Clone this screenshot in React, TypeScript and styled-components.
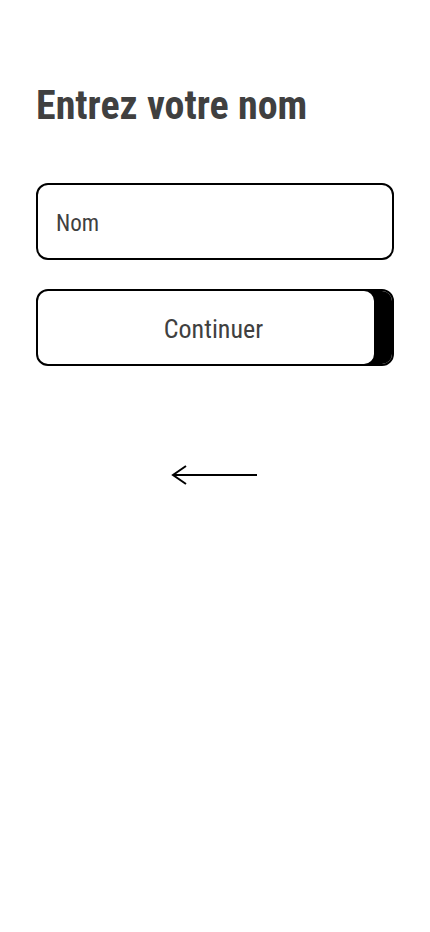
import React from "react";
import styled, { createGlobalStyle } from "styled-components";

const Global = createGlobalStyle`
  html, body { margin: 0; padding: 0; background: #fff; }
  body { font-family: "Roboto Condensed", Roboto, "Liberation Sans", sans-serif; font-stretch: condensed; }
  * { box-sizing: border-box; }
`;

const Page = styled.main`
  width: 430px;
  min-height: 932px;
  padding: 84px 36px 0 36px;
  display: flex;
  flex-direction: column;
`;

const Title = styled.h1`
  margin: 0;
  font-size: 40px;
  font-weight: 700;
  color: #404040;
  line-height: 44px;
`;

const Form = styled.form`
  margin-top: 55px;
  display: flex;
  flex-direction: column;
  gap: 29px;
`;

const Input = styled.input`
  height: 77px;
  width: 100%;
  border: 2px solid #000;
  border-radius: 12px;
  padding: 4px 18px 0;
  font-family: inherit;
  font-stretch: condensed;
  font-size: 23px;
  color: #404040;
  background: #fff;
  outline: none;
  &::placeholder { color: #404040; }
`;

const Button = styled.button`
  height: 77px;
  width: 100%;
  border: 2px solid #000;
  border-radius: 12px;
  background: #fff;
  box-shadow: inset -18px 0 0 #000;
  padding: 2px 3px 0 0;
  font-family: inherit;
  font-stretch: condensed;
  font-size: 26px;
  color: #404040;
  cursor: pointer;
`;

const BackRow = styled.div`
  margin-top: 98px;
  display: flex;
  justify-content: center;
  padding-right: 2px;
`;

const BackButton = styled.button`
  background: none;
  border: none;
  padding: 0;
  cursor: pointer;
  display: flex;
`;

export default function App() {
  return (
    <>
      <Global />
      <Page>
        <Title>Entrez votre nom</Title>
        <Form onSubmit={(e) => e.preventDefault()}>
          <Input placeholder="Nom" />
          <Button type="submit">Continuer</Button>
        </Form>
        <BackRow>
          <BackButton aria-label="Retour">
            <svg width="88" height="22" viewBox="0 0 88 22" fill="none">
              <path d="M87 11H3" stroke="#000" strokeWidth="2" />
              <path d="M16 2L3 11L16 20" stroke="#000" strokeWidth="2" fill="none" />
            </svg>
          </BackButton>
        </BackRow>
      </Page>
    </>
  );
}
